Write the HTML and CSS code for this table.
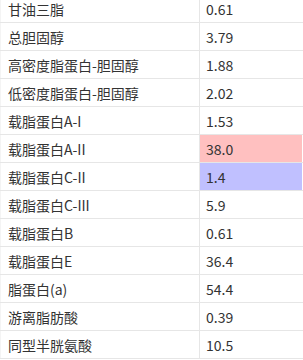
FILE: index.html
```html
<!DOCTYPE html>
<html>
<head>
<meta charset="utf-8">
<link rel="stylesheet" href="styles.css">
</head>
<body>
<table class="lab">
<tbody>
<tr><td class="name">甘油三脂</td><td class="val">0.61</td></tr>
<tr><td class="name">总胆固醇</td><td class="val">3.79</td></tr>
<tr><td class="name">高密度脂蛋白-胆固醇</td><td class="val">1.88</td></tr>
<tr><td class="name">低密度脂蛋白-胆固醇</td><td class="val">2.02</td></tr>
<tr><td class="name">载脂蛋白A-I</td><td class="val">1.53</td></tr>
<tr><td class="name">载脂蛋白A-II</td><td class="val high">38.0</td></tr>
<tr><td class="name">载脂蛋白C-II</td><td class="val low">1.4</td></tr>
<tr><td class="name">载脂蛋白C-III</td><td class="val">5.9</td></tr>
<tr><td class="name">载脂蛋白B</td><td class="val">0.61</td></tr>
<tr><td class="name">载脂蛋白E</td><td class="val">36.4</td></tr>
<tr><td class="name">脂蛋白(a)</td><td class="val">54.4</td></tr>
<tr><td class="name">游离脂肪酸</td><td class="val">0.39</td></tr>
<tr><td class="name">同型半胱氨酸</td><td class="val">10.5</td></tr>
</tbody>
</table>
</body>
</html>
```
FILE: styles.css
```css
html, body {
  margin: 0;
  padding: 0;
  background: #ffffff;
  overflow: hidden;
}
body {
  font-family: "Noto Sans CJK SC", "Noto Sans", sans-serif;
  font-size: 14px;
  color: #333333;
}
.lab {
  border-collapse: collapse;
  margin-top: -6px;
  width: 303px;
  table-layout: fixed;
}
.lab td {
  height: 27px;
  padding: 0 0 0 6px;
  border: 1px solid #e6e6e6;
  vertical-align: middle;
  line-height: 16px;
  white-space: nowrap;
}
.lab td.name {
  width: 191px;
  padding-left: 7px;
  border-left-color: #f4f4f4;
}
.lab td.val {
  border-right-color: #ffffff;
}
.lab td.high {
  background: #ffc0c0;
}
.lab td.low {
  background: #c0c0ff;
}
```
